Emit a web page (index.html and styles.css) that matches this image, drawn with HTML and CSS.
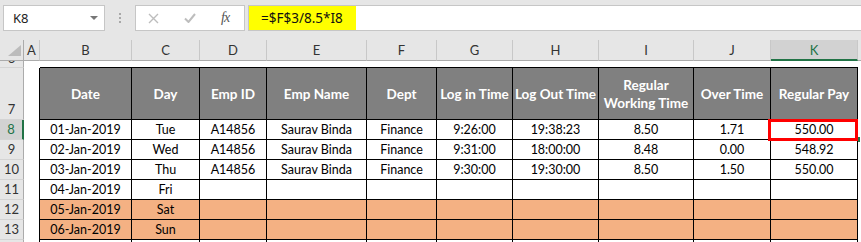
FILE: index.html
```html
<!DOCTYPE html>
<html>
<head>
    <title>Regular Pay</title>
    <link rel="stylesheet" href="styles.css">
</head>
<body>
    <div class="formula-bar">
        <div class="name-box"><span>K8</span><span class="caret"></span></div>
        <div class="grip"><i></i><i></i><i></i></div>
        <div class="fx-buttons">
            <svg width="11" height="11" viewBox="0 0 11 11"><path d="M1 1 L10 10 M10 1 L1 10" stroke="#bdbdbd" stroke-width="1.4" fill="none"/></svg>
            <svg width="12" height="10" viewBox="0 0 12 10"><path d="M1 5.5 L4.5 9 L11 1" stroke="#bdbdbd" stroke-width="2" fill="none"/></svg>
            <span class="fx">fx</span>
        </div>
        <div class="formula-input"><span class="formula-text">=$F$3/8.5*I8</span></div>
    </div>

    <div class="sheet">
        <!-- column headers -->
        <div class="corner"><svg width="13" height="11" viewBox="0 0 13 11"><polygon points="13,0 13,11 0,11" fill="#bcbcbc"/></svg></div>
        <div class="ch">A</div>
        <div class="ch">B</div>
        <div class="ch">C</div>
        <div class="ch">D</div>
        <div class="ch">E</div>
        <div class="ch">F</div>
        <div class="ch">G</div>
        <div class="ch">H</div>
        <div class="ch">I</div>
        <div class="ch">J</div>
        <div class="ch sel">K</div>
        <div class="ch last"></div>

        <!-- row 6, mostly hidden -->
        <div class="rh clip"><span>6</span></div>
        <div></div>
        <div class="top"></div><div class="top"></div><div class="top"></div><div class="top"></div><div class="top"></div>
        <div class="top"></div><div class="top"></div><div class="top"></div><div class="top"></div><div class="top"></div>
        <div></div>

        <!-- row 7 -->
        <div class="rh">7</div>
        <div class="edge"></div>
        <div class="c h">Date</div>
        <div class="c h">Day</div>
        <div class="c h">Emp ID</div>
        <div class="c h">Emp Name</div>
        <div class="c h">Dept</div>
        <div class="c h">Log in Time</div>
        <div class="c h">Log Out Time</div>
        <div class="c h">Regular<br>Working Time</div>
        <div class="c h">Over Time</div>
        <div class="c h">Regular Pay</div>
        <div></div>

        <!-- row 8 -->
        <div class="rh sel">8</div>
        <div class="edge"></div>
        <div class="c">01-Jan-2019</div>
        <div class="c">Tue</div>
        <div class="c">A14856</div>
        <div class="c">Saurav Binda</div>
        <div class="c">Finance</div>
        <div class="c">9:26:00</div>
        <div class="c">19:38:23</div>
        <div class="c">8.50</div>
        <div class="c">1.71</div>
        <div class="c active">550.00<span class="mark"></span></div>
        <div class="fill"><span class="handle"></span></div>

        <!-- row 9 -->
        <div class="rh">9</div>
        <div class="edge"></div>
        <div class="c">02-Jan-2019</div>
        <div class="c">Wed</div>
        <div class="c">A14856</div>
        <div class="c">Saurav Binda</div>
        <div class="c">Finance</div>
        <div class="c">9:31:00</div>
        <div class="c">18:00:00</div>
        <div class="c">8.48</div>
        <div class="c">0.00</div>
        <div class="c">548.92</div>
        <div></div>

        <!-- row 10 -->
        <div class="rh">10</div>
        <div class="edge"></div>
        <div class="c">03-Jan-2019</div>
        <div class="c">Thu</div>
        <div class="c">A14856</div>
        <div class="c">Saurav Binda</div>
        <div class="c">Finance</div>
        <div class="c">9:30:00</div>
        <div class="c">19:30:00</div>
        <div class="c">8.50</div>
        <div class="c">1.50</div>
        <div class="c">550.00</div>
        <div></div>

        <!-- row 11 -->
        <div class="rh">11</div>
        <div class="edge"></div>
        <div class="c">04-Jan-2019</div>
        <div class="c">Fri</div>
        <div class="c"></div><div class="c"></div><div class="c"></div><div class="c"></div>
        <div class="c"></div><div class="c"></div><div class="c"></div><div class="c"></div>
        <div></div>

        <!-- row 12 -->
        <div class="rh">12</div>
        <div class="edge"></div>
        <div class="c o">05-Jan-2019</div>
        <div class="c o">Sat</div>
        <div class="c o"></div><div class="c o"></div><div class="c o"></div><div class="c o"></div>
        <div class="c o"></div><div class="c o"></div><div class="c o"></div><div class="c o"></div>
        <div></div>

        <!-- row 13 -->
        <div class="rh">13</div>
        <div class="edge"></div>
        <div class="c o">06-Jan-2019</div>
        <div class="c o">Sun</div>
        <div class="c o"></div><div class="c o"></div><div class="c o"></div><div class="c o"></div>
        <div class="c o"></div><div class="c o"></div><div class="c o"></div><div class="c o"></div>
        <div></div>

        <!-- row 14, only its top edge shows -->
        <div class="rh"></div>
        <div class="edge"></div>
        <div class="c"></div><div class="c"></div><div class="c"></div><div class="c"></div><div class="c"></div>
        <div class="c"></div><div class="c"></div><div class="c"></div><div class="c"></div><div class="c"></div>
        <div></div>
    </div>
</body>
</html>
```

FILE: styles.css
```css
* {
    box-sizing: border-box;
}

body {
    margin: 0;
    background-color: white;
    font-family: Lato, "Liberation Sans", sans-serif;
    overflow: hidden;
}

/* formula bar */

.formula-bar {
    height: 40px;
    background-color: #e6e6e6;
    display: flex;
    align-items: flex-start;
    padding-top: 5px;
}

.name-box {
    margin-left: 3px;
    width: 102px;
    height: 26px;
    background-color: white;
    border: 1px solid #c6c6c6;
    display: flex;
    align-items: center;
    justify-content: space-between;
    padding: 0 6px 0 9px;
    font-family: "Noto Sans", sans-serif;
    font-size: 13px;
    color: #222;
}

.caret {
    width: 0;
    height: 0;
    border-left: 4px solid transparent;
    border-right: 4px solid transparent;
    border-top: 4px solid #777;
}

.grip {
    width: 30px;
    height: 26px;
    display: flex;
    flex-direction: column;
    align-items: center;
    justify-content: center;
    gap: 2px;
}

.grip i {
    width: 2px;
    height: 2px;
    background-color: #a8a8a8;
}

.fx-buttons {
    width: 110px;
    height: 26px;
    background-color: white;
    border: 1px solid #c6c6c6;
    display: flex;
    align-items: center;
    gap: 25px;
    padding-left: 12px;
}

.fx {
    font-family: "Liberation Serif", serif;
    font-style: italic;
    font-size: 14px;
    color: #555;
    letter-spacing: -1px;
}

.formula-input {
    flex: 1;
    margin-left: 3px;
    height: 26px;
    background-color: white;
    border: 1px solid #c6c6c6;
    border-right: none;
}

.formula-text {
    display: flex;
    align-items: center;
    width: 107px;
    height: 100%;
    background-color: #ffff00;
    padding-left: 12px;
    font-family: "Noto Sans", sans-serif;
    font-size: 13.5px;
    color: #111;
}

/* sheet grid */

.sheet {
    display: grid;
    grid-template-columns: 24px 16px 92px 68px 67px 100px 70px 76px 86px 95px 77px 87px 1fr;
    grid-template-rows: 21px 7px 52px repeat(7, 20px);
    font-size: 12.5px;
}

.corner {
    background-color: #e6e6e6;
    border-right: 1px solid #ababab;
    border-bottom: 1px solid #ababab;
    display: flex;
    align-items: flex-end;
    justify-content: flex-end;
    padding: 0 2px 4px 0;
}

.ch {
    background-color: #e6e6e6;
    border-right: 1px solid #c8c8c8;
    border-bottom: 1px solid #ababab;
    display: flex;
    align-items: center;
    justify-content: center;
    color: #333;
    font-size: 13px;
}

.ch.sel {
    background-color: #d2d2d2;
    color: #217346;
    border-bottom: 2px solid #217346;
}

.ch.last {
    border-right: none;
}

.rh {
    background-color: #e6e6e6;
    border-right: 1px solid #ababab;
    border-bottom: 1px solid #d4d4d4;
    display: flex;
    align-items: flex-end;
    justify-content: center;
    padding-bottom: 2px;
    color: #333;
    font-size: 13px;
}

.rh.sel {
    background-color: #d2d2d2;
    color: #217346;
    border-right: 2px solid #217346;
}

.rh.clip {
    overflow: hidden;
    align-items: flex-start;
    padding-bottom: 0;
}

.rh.clip span {
    line-height: 13px;
    margin-top: -9px;
}

.top {
    border-bottom: 1px solid black;
}

.edge {
    border-right: 1px solid black;
}

.c {
    border-right: 1px solid black;
    border-bottom: 1px solid black;
    display: flex;
    align-items: center;
    justify-content: center;
    white-space: nowrap;
    color: #000;
}

.h {
    background-color: #808080;
    color: white;
    font-weight: bold;
    font-size: 13.5px;
    text-align: center;
    line-height: 18px;
}

.o {
    background-color: #f4b183;
}

.active {
    position: relative;
}

.mark {
    position: absolute;
    left: -3px;
    top: -1px;
    width: 90px;
    height: 22px;
    border: 3px solid #ff0000;
}

.fill {
    display: flex;
    align-items: flex-end;
}

.handle {
    width: 2px;
    height: 5px;
    margin-bottom: -2px;
    background-color: #217346;
}
```
